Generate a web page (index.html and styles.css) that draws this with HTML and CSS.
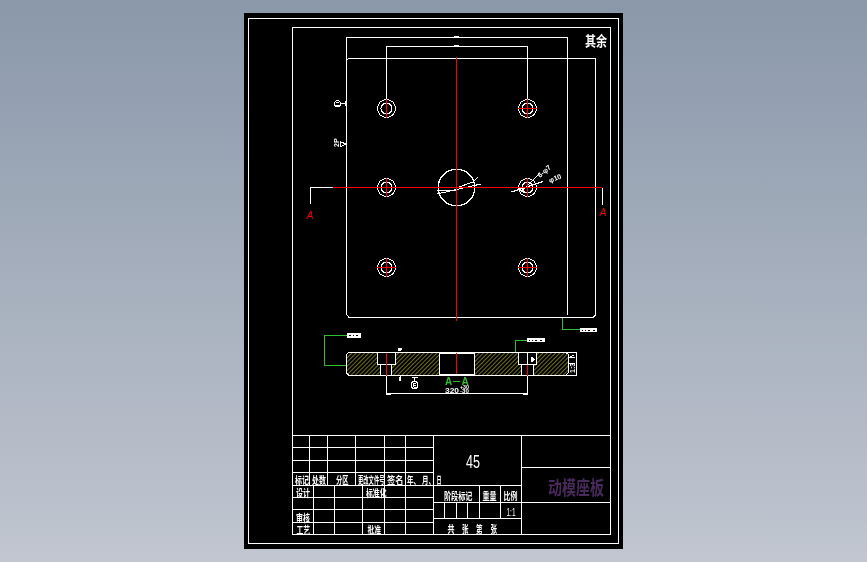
FILE: index.html
```html
<!DOCTYPE html>
<html lang="zh">
<head>
<meta charset="utf-8">
<title>动模座板</title>
<link rel="stylesheet" href="styles.css">
</head>
<body>
<main class="viewport">
<div class="paper">
<svg class="sheet" viewBox="244 13 379 536" width="379" height="536" xmlns="http://www.w3.org/2000/svg">
  <defs>
    <pattern id="hatch" width="3" height="3" patternUnits="userSpaceOnUse" patternTransform="rotate(45)">
      <rect width="1" height="3" class="hatch-line"/>
    </pattern>
    <g id="hole">
      <circle r="9" class="ln"/>
      <circle r="5.5" class="ln"/>
    </g>
    <g id="cross-h"><path d="M-9.5 0H9.5M0 -9.5V9.5" class="red"/></g>
    <g id="cross-v"><path d="M0 -9.5V9.5" class="red"/></g>
  </defs>

  <!-- frames -->
  <rect x="248.5" y="18.5" width="370" height="525" class="ln"/>
  <rect x="292.5" y="27.5" width="318" height="507" class="ln"/>

  <!-- plan view -->
  <path d="M346.5 60V314.5L349 317.5H593L595.5 315V58.5H349L346.5 60" class="ln"/>
  <path d="M346.5 60V37.5H567.5V315" class="ln"/>
  <path d="M386.5 99V46.5H527.5V99" class="ln"/>
  <path d="M454 36.5H459M454 45.5H459" class="ln"/>

  <use href="#hole" x="386.5" y="108.5"/>
  <use href="#hole" x="527.5" y="108.5"/>
  <use href="#hole" x="386.5" y="187.5"/>
  <use href="#hole" x="527.5" y="187.5"/>
  <use href="#hole" x="386.5" y="267.5"/>
  <use href="#hole" x="527.5" y="267.5"/>
  <circle cx="456.5" cy="187.5" r="18.3" class="ln thick"/>

  <!-- section arrows -->
  <path d="M333 187.5H310.5V204" class="ln"/>
  <path d="M310.5 200V204M602.5 187.5V205" class="ln thick"/>
  <path d="M437 190.5H457M437 194L481 184M456.5 188L474 181.5M474 181L478 177" class="ln"/>
  <path d="M511.5 192L543 181.5M520 193L540 173M517 187L524 193" class="ln"/>

  <!-- centre lines -->
  <path d="M456.5 57V321" class="red"/>
  <path d="M333 187.5H602" class="red"/>
  <use href="#cross-v" x="386.5" y="108.5"/>
  <use href="#cross-h" x="527.5" y="108.5"/>
  <use href="#cross-v" x="386.5" y="187.5"/>
  <use href="#cross-h" x="527.5" y="187.5"/>
  <use href="#cross-h" x="386.5" y="267.5"/>
  <use href="#cross-h" x="527.5" y="267.5"/>

  <text x="310" y="218.5" class="t-red">A</text>
  <text x="603" y="216" class="t-red">A</text>

  <!-- notes on plan -->
  <circle cx="337.5" cy="103.5" r="3" class="ln"/>
  <path d="M336 102H339M336 105H339M340.5 103.5H345M345 101V106" class="ln"/>
  <path d="M340 141.5L346 144L340 147Z" class="ln"/>
  <text transform="translate(339 147) rotate(-90)" class="t-tiny">2P</text>
  <text transform="translate(540 178) rotate(-40)" class="t-tiny">6-φ7</text>
  <text transform="translate(550 183) rotate(-22)" class="t-tiny">φ10</text>
  <text x="585" y="45.5" class="t-note" textLength="22" lengthAdjust="spacingAndGlyphs">其余</text>

  <!-- section view -->
  <path d="M347 354L349 352.5H566L568 354V373L566 375.5H349L347 373Z" fill="url(#hatch)"/>
  <path d="M378 352.5H395V364H391.5V375.5H380.5V364H378Z" class="void"/>
  <path d="M439.5 352.5H474.5V374.5H439.5Z" class="void"/>
  <path d="M518.5 352.5H536.5V364.5H533.5V375.5H521.5V364.5H518.5Z" class="void"/>
  <path d="M347 354L349 352.5H566M566 375.5H349L346.5 373V354" class="ln"/>
  <path d="M566 352.5H576.5V375.5H566M566 352.5L568 354V373L566 375.5" class="ln"/>
  <path d="M377.5 352.5V364.5H395.5V352.5M380.5 364.5V375.5M391.5 364.5V375.5" class="ln"/>
  <path d="M439.5 352.5V374.5M474.5 352.5V374.5M439.5 353.5H474.5M439.5 374.5H474.5" class="ln thick"/>
  <path d="M518.5 352.5V364.5H536.5V352.5M521.5 364.5V375.5M533.5 364.5V375.5M527.5 352.5V364.5" class="ln"/>
  <path d="M386.5 352.5V375.5M456.5 353V374M527.5 364.5V375.5" class="red"/>

  <path d="M386.5 375.5V395M527.5 375.5V395M386.5 393.5H527.5" class="ln"/>
  <path d="M386.5 394.5H391M523 394.5H527.5" class="ln"/>
  <text x="448.5" y="385" class="t-aa">A</text>
  <path d="M453 381.5H460" class="green"/>
  <text x="465" y="385" class="t-aa">A</text>
  <text x="445" y="392.5" class="t-dim" textLength="14" lengthAdjust="spacingAndGlyphs">320</text>
  <text x="460" y="388.5" class="t-lim" textLength="9" lengthAdjust="spacingAndGlyphs">+30</text>
  <text x="460" y="392.8" class="t-lim" textLength="9" lengthAdjust="spacingAndGlyphs">-30</text>
  <circle cx="414.5" cy="385" r="3.5" class="ln"/>
  <path d="M414.5 381.5V377.5M411.5 377.5H417.5M413.5 383V387M413.5 383.5H415.5M413.5 385H415.5M413.5 387H415.5" class="ln"/>
  <path d="M397.5 347.5H402.5L401 351H398.5ZM398.5 380.5V377.5L400.5 375.5V380.5Z" class="solid"/>
  <path d="M530.5 357H533L535 359.5L533 362H530.5Z" class="solid"/>
  <text transform="translate(575 373) rotate(-90)" class="t-tiny">1:3</text>
  <path d="M568 358L574 355M568 357H575M568 363H575" class="ln"/>

  <!-- leaders -->
  <path d="M347 335.5H324.5V365.5H346" class="green"/>
  <path d="M528 340.5H515.5V352" class="green"/>
  <path d="M562.5 317.5V329.5H580" class="green"/>
  <rect x="347" y="333" width="14" height="5" class="solid"/>
  <rect x="527" y="338" width="18" height="4" class="solid"/>
  <rect x="580" y="328" width="17" height="4" class="solid"/>
  <path d="M349 335.5H351M353 335.5H354M356 335.5H358M529 340H530M532 340H533M535 340H537M540 340H542M582 330H583M585 330H586M588 330H590M593 330H595" class="gap"/>

  <!-- title block grid -->
  <path d="M292.5 435.5H610.5M292.5 447.5H433.5M292.5 460.5H433.5M292.5 472.5H433.5M292.5 485.5H521.5M292.5 497.5H433.5M292.5 509.5H433.5M292.5 522.5H433.5" class="ln"/>
  <path d="M309.5 435.5V485.5M327.5 435.5V485.5M355.5 435.5V485.5M384.5 435.5V534.5M405.5 435.5V534.5M433.5 435.5V534.5M313.5 485.5V534.5M334.5 485.5V534.5M362.5 485.5V534.5" class="ln"/>
  <path d="M521.5 435.5V534.5M521.5 467.5H610.5M433.5 502.5H610.5M433.5 518.5H521.5M479.5 485.5V518.5M500.5 485.5V518.5M444.5 502.5V518.5M456.5 502.5V518.5M467.5 502.5V518.5" class="ln"/>

  <!-- title block text -->
  <g class="t-cell">
    <text x="295" y="484" textLength="14" lengthAdjust="spacingAndGlyphs">标记</text>
    <text x="312" y="484" textLength="14" lengthAdjust="spacingAndGlyphs">处数</text>
    <text x="336" y="484" textLength="12.5" lengthAdjust="spacingAndGlyphs">分区</text>
    <text x="358" y="484" textLength="26.5" lengthAdjust="spacingAndGlyphs">更改文件号</text>
    <text x="387" y="484" textLength="16.5" lengthAdjust="spacingAndGlyphs">签名</text>
    <text x="407" y="484" textLength="13" lengthAdjust="spacingAndGlyphs">年、</text>
    <text x="422" y="484" textLength="13" lengthAdjust="spacingAndGlyphs">月、</text>
    <text x="436.5" y="484" textLength="5" lengthAdjust="spacingAndGlyphs">日</text>
    <text x="296" y="497" textLength="14" lengthAdjust="spacingAndGlyphs">设计</text>
    <text x="366" y="497" textLength="20.5" lengthAdjust="spacingAndGlyphs">标准化</text>
    <text x="296" y="522" textLength="14" lengthAdjust="spacingAndGlyphs">审核</text>
    <text x="296.5" y="534" textLength="13.5" lengthAdjust="spacingAndGlyphs">工艺</text>
    <text x="367.5" y="534" textLength="13.5" lengthAdjust="spacingAndGlyphs">批准</text>
    <text x="444" y="500" textLength="28.5" lengthAdjust="spacingAndGlyphs">阶段标记</text>
    <text x="482.5" y="500" textLength="14" lengthAdjust="spacingAndGlyphs">重量</text>
    <text x="503.5" y="500" textLength="14" lengthAdjust="spacingAndGlyphs">比例</text>
    <text x="447.5" y="533" textLength="7" lengthAdjust="spacingAndGlyphs">共</text>
    <text x="462" y="533" textLength="6.5" lengthAdjust="spacingAndGlyphs">张</text>
    <text x="476" y="533" textLength="6.5" lengthAdjust="spacingAndGlyphs">第</text>
    <text x="490.5" y="533" textLength="6.5" lengthAdjust="spacingAndGlyphs">张</text>
  </g>
  <text x="466" y="468" class="t-num" textLength="14" lengthAdjust="spacingAndGlyphs">45</text>
  <text x="506.5" y="516" class="t-ratio" textLength="9" lengthAdjust="spacingAndGlyphs">1:1</text>
  <text x="548" y="495" class="t-name" textLength="56" lengthAdjust="spacingAndGlyphs">动模座板</text>
</svg>
</div>
</main>
</body>
</html>
```
FILE: styles.css
```css
html, body {
  margin: 0;
  height: 100%;
}
body {
  background: linear-gradient(180deg, #8a98aa 0%, #c1c6d0 100%);
  overflow: hidden;
}
.viewport {
  height: 562px;
  display: flex;
  justify-content: center;
  align-items: flex-start;
  padding-top: 13px;
  box-sizing: border-box;
}
.paper {
  background: #000;
}
.sheet {
  display: block;
  will-change: transform;
  font-family: "Noto Sans CJK SC", "Liberation Sans", sans-serif;
}
.ln, .red, .green {
  fill: none;
  stroke-width: 1;
  shape-rendering: crispEdges;
}
.ln { stroke: #fff; }
.thick { stroke-width: 1.4; }
.red { stroke: #f00; }
.green { stroke: #2fc02f; }
.solid { fill: #fff; stroke: none; shape-rendering: crispEdges; }
.void { fill: #000; stroke: none; shape-rendering: crispEdges; }
.gap { stroke: #000; stroke-width: 1; fill: none; shape-rendering: crispEdges; }
.hatch-line { fill: #6f6f1e; }
.t-red {
  fill: #f00;
  font: italic 10px "Liberation Sans", sans-serif;
  text-anchor: middle;
}
.t-tiny {
  fill: #fff;
  font: 700 7px "Liberation Sans", sans-serif;
}
.t-note {
  fill: #fff;
  font: 700 14px "Noto Sans CJK SC", sans-serif;
}
.t-aa {
  fill: #2fc02f;
  font: 700 10px "Liberation Sans", sans-serif;
  text-anchor: middle;
}
.t-dim {
  fill: #fff;
  font: 700 8px "Liberation Sans", sans-serif;
}
.t-lim {
  fill: #fff;
  font: 700 5px "Liberation Sans", sans-serif;
}
.t-cell {
  fill: #fff;
  font: 700 10px "Noto Sans CJK SC", sans-serif;
}
.t-num {
  fill: #fff;
  font: 19px "Liberation Sans", sans-serif;
}
.t-ratio {
  fill: #fff;
  font: 10px "Liberation Sans", sans-serif;
}
.t-name {
  fill: #4a2a5c;
  font: 700 19px "Noto Sans CJK SC", sans-serif;
}
```
